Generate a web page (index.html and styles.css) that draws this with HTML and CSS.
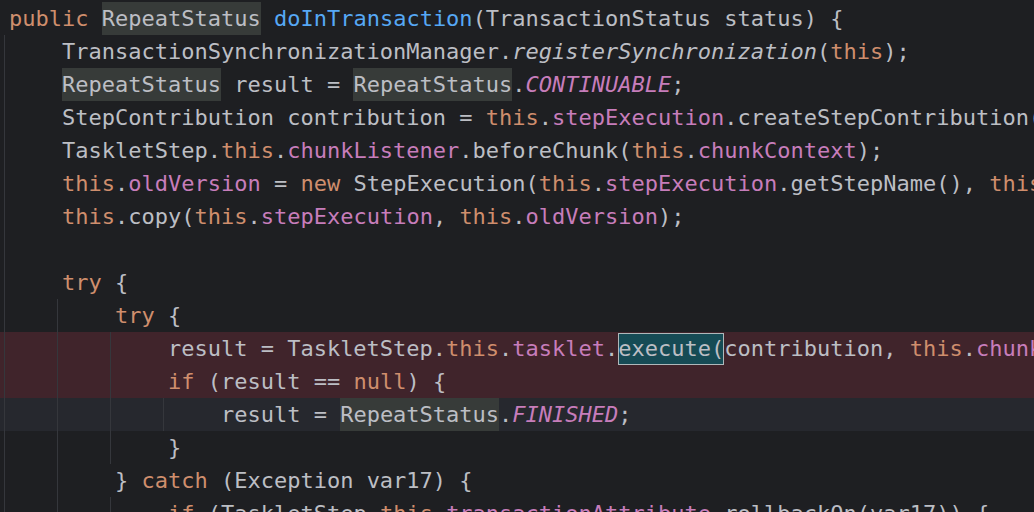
FILE: index.html
```html
<!DOCTYPE html>
<html>
<head>
<meta charset="utf-8">
<link rel="stylesheet" href="styles.css">
</head>
<body>
<div class="editor">
  <div class="guide g0"></div>
  <div class="guide g1"></div>
  <div class="guide g2a"></div>
  <div class="guide g2b"></div>
  <div class="guide g3"></div>
  <div class="line"><span class="kw">public</span> <span class="use">RepeatStatus</span> <span class="fn">doInTransaction</span>(TransactionStatus status) {</div>
  <div class="line">    TransactionSynchronizationManager.<span class="it">registerSynchronization</span>(<span class="kw">this</span>);</div>
  <div class="line">    <span class="use">RepeatStatus</span> result = <span class="use">RepeatStatus</span>.<span class="st">CONTINUABLE</span>;</div>
  <div class="line">    StepContribution contribution = <span class="kw">this</span>.<span class="fd">stepExecution</span>.createStepContribution();</div>
  <div class="line">    TaskletStep.<span class="kw">this</span>.<span class="fd">chunkListener</span>.beforeChunk(<span class="kw">this</span>.<span class="fd">chunkContext</span>);</div>
  <div class="line">    <span class="kw">this</span>.<span class="fd">oldVersion</span> = <span class="kw">new</span> StepExecution(<span class="kw">this</span>.<span class="fd">stepExecution</span>.getStepName(), <span class="kw">this</span>.<span class="fd">stepExecution</span>.getJobExecution());</div>
  <div class="line">    <span class="kw">this</span>.copy(<span class="kw">this</span>.<span class="fd">stepExecution</span>, <span class="kw">this</span>.<span class="fd">oldVersion</span>);</div>
  <div class="line"> </div>
  <div class="line">    <span class="kw">try</span> {</div>
  <div class="line">        <span class="kw">try</span> {</div>
  <div class="line err">            result = TaskletStep.<span class="kw">this</span>.<span class="fd">tasklet</span>.<span class="found">execute(</span>contribution, <span class="kw">this</span>.<span class="fd">chunkContext</span>);</div>
  <div class="line err">            <span class="kw">if</span> (result == <span class="kw">null</span>) {</div>
  <div class="line caret">                result = <span class="use">RepeatStatus</span>.<span class="st">FINISHED</span>;</div>
  <div class="line">            }</div>
  <div class="line">        } <span class="kw">catch</span> (Exception var17) {</div>
  <div class="line">            <span class="kw">if</span> (TaskletStep.<span class="kw">this</span>.<span class="fd">transactionAttribute</span>.rollbackOn(var17)) {</div>
</div>
</body>
</html>
```

FILE: styles.css
```css
html, body {
  margin: 0;
  padding: 0;
  background: #1e1f22;
  overflow: hidden;
}

.editor {
  position: relative;
  width: 1034px;
  height: 512px;
  overflow: hidden;
  padding-top: 2px;
  box-sizing: border-box;
  font-family: "DejaVu Sans Mono", "Liberation Mono", monospace;
  font-size: 22px;
  color: #bcbec4;
}

.line {
  height: 33px;
  line-height: 33px;
  white-space: pre;
  padding-left: 9px;
}

.line.err {
  background: #40242b;
}

.line.caret {
  background: #26282e;
}

.kw { color: #cf8e6d; }
.fn { color: #56a8f5; }
.fd { color: #c77dbb; }
.st { color: #c77dbb; font-style: italic; }
.it { font-style: italic; }

.use {
  background: #373b39;
  display: inline-block;
  height: 33px;
}

.found {
  background: #164b55;
  outline: 1px solid #aeb8ba;
  outline-offset: -1px;
  display: inline-block;
  height: 32px;
  line-height: 31px;
  vertical-align: top;
  margin-top: 1px;
}

.guide {
  position: absolute;
  width: 1px;
  background: #35373c;
  z-index: 1;
}

.g0 { left: 4px; top: 35px; bottom: 0; }
.g1 { left: 57px; top: 299px; bottom: 0; }
.g2a { left: 110px; top: 332px; height: 132px; }
.g2b { left: 110px; top: 497px; bottom: 0; }
.g3 { left: 163px; top: 398px; height: 33px; }
```
